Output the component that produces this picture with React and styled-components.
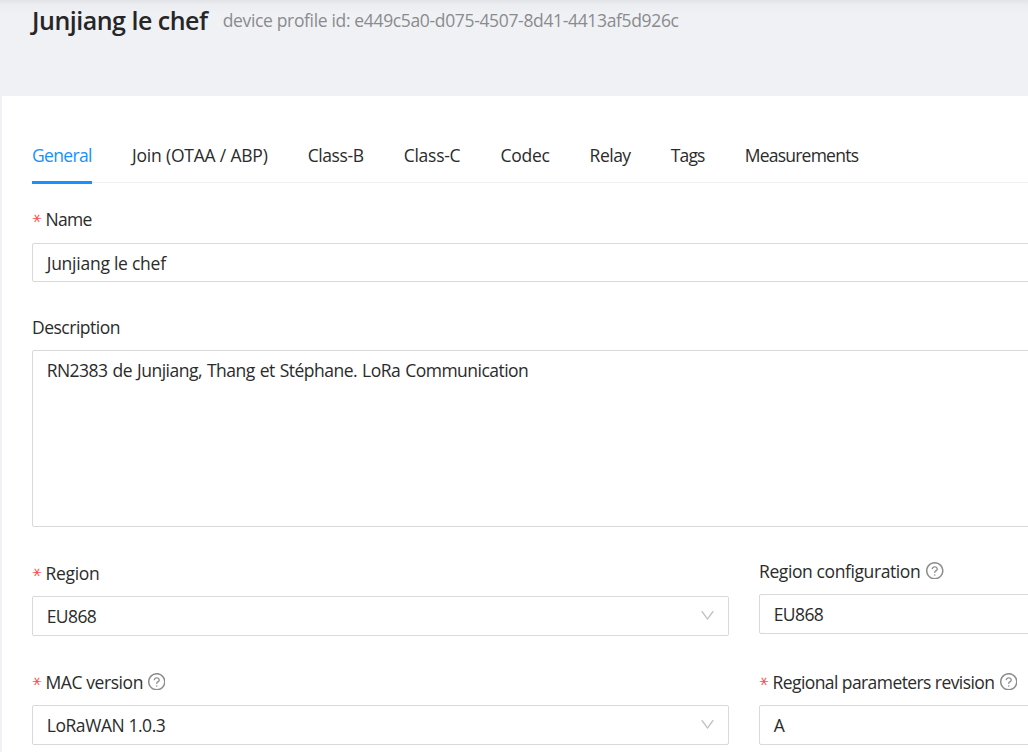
import React from "react";
import styled, { createGlobalStyle } from "styled-components";

const GlobalStyle = createGlobalStyle`
  * { box-sizing: border-box; }
  html, body { margin: 0; height: 752px; overflow: hidden; background: #f0f1f5; }
  body {
    font-family: "Open Sans", "Noto Sans", sans-serif;
    font-size: 17.5px;
    line-height: 27px;
    color: #2b2b2b;
  }
`;

const Page = styled.div`
  height: 752px;
  overflow: hidden;
  display: flex;
  flex-direction: column;
`;

const Header = styled.header`
  flex: 0 0 96px;
  display: flex;
  align-items: flex-start;
  padding-left: 32px;
  background: linear-gradient(#e2e3e6 0, #ecedf0 5px, #f0f1f5 13px);
  white-space: nowrap;
`;

const Title = styled.h1`
  margin: 0 15px 0 0;
  width: 175.7px;
  font-size: 25px;
  line-height: 40px;
  font-weight: 600;
  letter-spacing: -0.5px;
  color: #262626;
`;

const Subtitle = styled.span`
  margin-top: 7px;
  color: #8a8b8d;
  letter-spacing: -0.345px;
`;

const Card = styled.main`
  flex: 1;
  min-height: 0;
  margin-left: 2px;
  padding: 46px 0 0 30px;
  background: #fff;
  overflow: hidden;
`;

const TabBar = styled.nav`
  display: flex;
  gap: 40px;
  height: 41px;
  border-bottom: 1px solid #f0f0f0;
`;

const Tab = styled.div`
  flex: 0 0 ${(p) => p.$width}px;
  height: 42px;
  white-space: nowrap;
  letter-spacing: ${(p) => p.$track}px;
  color: ${(p) => (p.$active ? "#1890ff" : "inherit")};
  border-bottom: 3px solid ${(p) => (p.$active ? "#1890ff" : "transparent")};
`;

const Form = styled.form`
  display: flex;
  flex-direction: column;
  padding-top: 22px;
`;

const Columns = styled.div`
  display: grid;
  grid-template-columns: 697px 697px;
  column-gap: 30px;
`;

const Column = styled.div`
  display: flex;
  flex-direction: column;
  padding-top: ${(p) => p.$top || 0}px;
`;

const Field = styled.div`
  display: flex;
  flex-direction: column;
  margin-bottom: ${(p) => p.$gap}px;
`;

const Label = styled.label`
  display: flex;
  align-items: center;
  height: 29px;
  margin-bottom: ${(p) => p.$space}px;
  white-space: nowrap;
  letter-spacing: ${(p) => p.$track || 0}px;
`;

const Star = styled.span`
  width: 9px;
  margin: 3px 5px 0 -0.5px;
  color: #ff4d4f;
  font-family: "DejaVu Sans", sans-serif;
  letter-spacing: 0;
  transform: rotate(90deg);
  transform-origin: 4.4px 10.5px;
`;

const LabelText = styled.span`
  width: ${(p) => (p.$width ? `${p.$width}px` : "auto")};
`;

const Box = styled.div`
  display: flex;
  align-items: ${(p) => (p.$multiline ? "flex-start" : "center")};
  justify-content: space-between;
  width: ${(p) => (p.$wide ? "1424px" : "100%")};
  height: ${(p) => p.$height}px;
  padding: ${(p) => (p.$multiline ? "6px" : "1px")} 13px 0 13.7px;
  border: 1px solid #d9d9d9;
  border-radius: 2px;
  background: #fff;
  white-space: nowrap;
  letter-spacing: ${(p) => p.$track || 0}px;
  word-spacing: ${(p) => (p.$multiline ? "1px" : "normal")};
`;

const HelpSvg = styled.svg`
  display: block;
  margin: -2.4px 0 0 5px;
  color: #8c8c8c;
`;

const ArrowSvg = styled.svg`
  display: block;
  margin-top: -3px;
  color: #bfbfbf;
`;

const Help = () => (
  <HelpSvg width="17.5" height="17.5" viewBox="64 64 896 896" fill="currentColor">
    <path d="M512 64C264.600 64 64 264.600 64 512s200.600 448 448 448 448-200.600 448-448S759.400 64 512 64zm0 820c-205.400 0-372-166.600-372-372s166.600-372 372-372 372 166.600 372 372-166.600 372-372 372z" />
    <path d="M623.600 316.700C593.600 290.400 554 276 512 276s-81.600 14.500-111.600 40.700C369.200 344 352 380.700 352 420v7.600c0 4.400 3.600 8 8 8h48c4.400 0 8-3.600 8-8V420c0-44.100 43.100-80 96-80s96 35.900 96 80c0 31.100-22 59.600-56.100 72.700-21.200 8.100-39.200 22.300-52.100 40.900-13.100 19-19.900 41.800-19.900 64.900V620c0 4.400 3.600 8 8 8h48c4.400 0 8-3.600 8-8v-22.700a48.300 48.300 0 0 1 30.900-44.800c59-22.700 97.100-74.700 97.100-132.500.1-39.300-17.100-76-48.300-103.300zM472 732a40 40 0 1 0 80 0 40 40 0 1 0-80 0z" />
  </HelpSvg>
);

const Arrow = () => (
  <ArrowSvg width="15" height="15" viewBox="64 64 896 896" fill="currentColor">
    <path d="M884 256h-75c-5.100 0-9.900 2.500-12.900 6.600L512 654.200 227.900 262.600c-3-4.100-7.800-6.600-12.900-6.600h-75c-6.500 0-10.300 7.400-6.500 12.700l352.600 486.100c12.800 17.600 39 17.600 51.700 0l352.600-486.100c3.900-5.300.1-12.700-6.400-12.700z" />
  </ArrowSvg>
);

const tabs = [
  { label: "General", width: 60, track: -0.65, active: true },
  { label: "Join (OTAA / ABP)", width: 135, track: -0.2 },
  { label: "Class-B", width: 55.7, track: -0.4 },
  { label: "Class-C", width: 55.7, track: -0.25 },
  { label: "Codec", width: 48.5, track: -0.25 },
  { label: "Relay", width: 40.6, track: -0.5 },
  { label: "Tags", width: 33.2, track: -0.8 },
  { label: "Measurements", width: 114, track: -0.76 },
];

function FormField({ label, value, required, help, select, wide, multiline, height, gap, space, labelTrack, labelWidth, track }) {
  return (
    <Field $gap={gap}>
      <Label $space={space} $track={labelTrack}>
        {required && <Star>*</Star>}
        <LabelText $width={labelWidth}>{label}</LabelText>
        {help && <Help />}
      </Label>
      <Box $height={height} $wide={wide} $multiline={multiline} $track={track}>
        <span>{value}</span>
        {select && <Arrow />}
      </Box>
    </Field>
  );
}

export default function App() {
  return (
    <Page>
      <GlobalStyle />
      <Header>
        <Title>Junjiang le chef</Title>
        <Subtitle>device profile id: e449c5a0-d075-4507-8d41-4413af5d926c</Subtitle>
      </Header>
      <Card>
        <TabBar>
          {tabs.map((t) => (
            <Tab key={t.label} $width={t.width} $track={t.track} $active={t.active}>
              {t.label}
            </Tab>
          ))}
        </TabBar>
        <Form>
          <FormField required wide label="Name" value="Junjiang le chef" height={39} space={9} gap={31} labelTrack={-0.7} track={-0.25} />
          <FormField wide multiline label="Description" value="RN2383 de Junjiang, Thang et Stéphane. LoRa Communication" height={177} space={8} gap={30} labelTrack={-0.5} track={-0.52} />
          <Columns>
            <Column $top={2}>
              <FormField required select label="Region" value="EU868" height={40} space={8} gap={32} labelTrack={-0.3} track={-0.6} />
              <FormField required select help label="MAC version" labelWidth={97} value="LoRaWAN 1.0.3" height={40} space={8} gap={30} labelTrack={-0.42} track={-0.43} />
            </Column>
            <Column>
              <FormField select help label="Region configuration" labelWidth={162} value="EU868" height={40} space={8} gap={34} labelTrack={-0.4} track={-0.6} />
              <FormField required select help label="Regional parameters revision" labelWidth={222} value="A" height={40} space={8} gap={30} labelTrack={-0.58} />
            </Column>
          </Columns>
        </Form>
      </Card>
    </Page>
  );
}
